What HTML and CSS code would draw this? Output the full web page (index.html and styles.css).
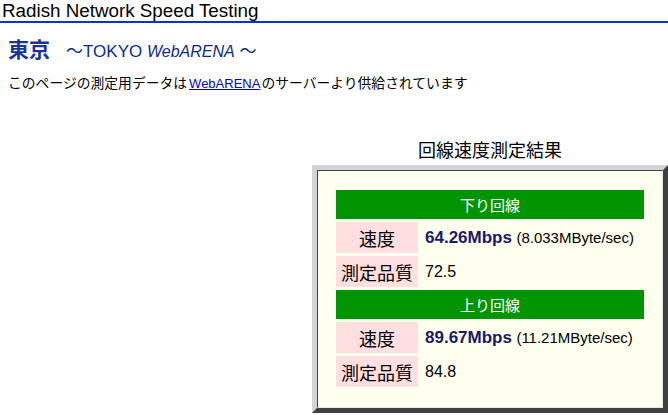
FILE: index.html
```html
<!DOCTYPE html>
<html lang="ja">
<head>
<meta charset="utf-8">
<title>Radish Network Speed Testing</title>
<link rel="stylesheet" href="styles.css">
</head>
<body>
<header class="site-header">
  <h1 class="site-title">Radish Network Speed Testing</h1>
</header>
<main class="content">
  <h2 class="location"><span class="city">東京</span><span class="sub">〜TOKYO <em class="brand">WebARENA</em> 〜</span></h2>
  <p class="note">このページの測定用データは<a href="#" class="link">WebARENA</a>のサーバーより供給されています</p>
  <section class="result">
    <div class="result-title">回線速度測定結果</div>
    <div class="result-box">
      <div class="result-inner">
        <table class="result-table">
          <tr><th colspan="2" class="dir">下り回線</th></tr>
          <tr><td class="label">速度</td><td class="value"><span class="speed">64.26Mbps</span> <span class="bytes">(8.033MByte/sec)</span></td></tr>
          <tr><td class="label">測定品質</td><td class="value">72.5</td></tr>
          <tr><th colspan="2" class="dir">上り回線</th></tr>
          <tr><td class="label">速度</td><td class="value"><span class="speed">89.67Mbps</span> <span class="bytes">(11.21MByte/sec)</span></td></tr>
          <tr><td class="label">測定品質</td><td class="value">84.8</td></tr>
        </table>
      </div>
    </div>
  </section>
</main>
</body>
</html>
```
FILE: styles.css
```css
html, body {
  margin: 0;
  padding: 0;
  background: #ffffff;
  overflow: hidden;
}
body {
  font-family: "Liberation Sans", "Noto Sans CJK JP", sans-serif;
  color: #000;
  width: 668px;
}
.site-header {
  border-bottom: 2px solid #0033cc;
  padding: 0 0 1px 2px;
  height: 20px;
}
.site-title {
  margin: 0;
  font-size: 18.8px;
  font-weight: normal;
  line-height: 21px;
}
.content {
  padding: 0 0 0 8px;
}
.location {
  margin: 12px 0 0 0;
  font-weight: normal;
  display: flex;
  align-items: baseline;
  line-height: 26px;
  height: 26px;
}
.city {
  font-family: "Noto Sans CJK JP", sans-serif;
  font-size: 21px;
  font-weight: bold;
  color: #1a3399;
  margin-right: 16px;
}
.sub {
  font-size: 17px;
  color: #0a2a8a;
}
.brand {
  font-style: italic;
  font-family: "Liberation Sans", sans-serif;
  font-size: 16px;
}
.note {
  margin: 12px 0 0 0;
  font-size: 13.8px;
  line-height: 18px;
  font-family: "Noto Sans CJK JP", sans-serif;
}
.link {
  color: #0000cc;
  font-family: "Liberation Sans", sans-serif;
  font-size: 13px;
  margin: 0 1px 0 2px;
}
.result {
  display: flex;
  flex-direction: column;
  align-items: flex-end;
  margin-top: 44px;
}
.result-title {
  width: 356px;
  text-align: center;
  font-family: "Noto Sans CJK JP", sans-serif;
  font-size: 18px;
  line-height: 24px;
  margin-bottom: 4px;
}
.result-box {
  width: 356px;
  box-sizing: border-box;
  border: 5px solid;
  border-color: #d4d4d4 #404040 #404040 #d4d4d4;
}
.result-inner {
  border: 1px solid;
  border-color: #404040 #e8e8e8 #e8e8e8 #404040;
  background: #fffff0;
  padding: 16px 15px 17px 15px;
}
.result-table {
  width: 100%;
  border-collapse: separate;
  border-spacing: 3px;
}
.dir {
  background: #009400;
  color: #ffffff;
  font-weight: normal;
  font-family: "Noto Sans CJK JP", sans-serif;
  font-size: 15px;
  height: 29px;
  padding: 0;
  text-align: center;
}
.label {
  background: #ffdfdf;
  width: 82px;
  height: 31px;
  padding: 0;
  text-align: center;
  font-family: "Noto Sans CJK JP", sans-serif;
  font-size: 18px;
}
.value {
  padding: 0 0 0 4px;
  font-size: 16px;
  white-space: nowrap;
}
.speed {
  font-weight: bold;
  font-size: 17px;
  color: #1a1a66;
}
.bytes {
  font-size: 15px;
}
```
